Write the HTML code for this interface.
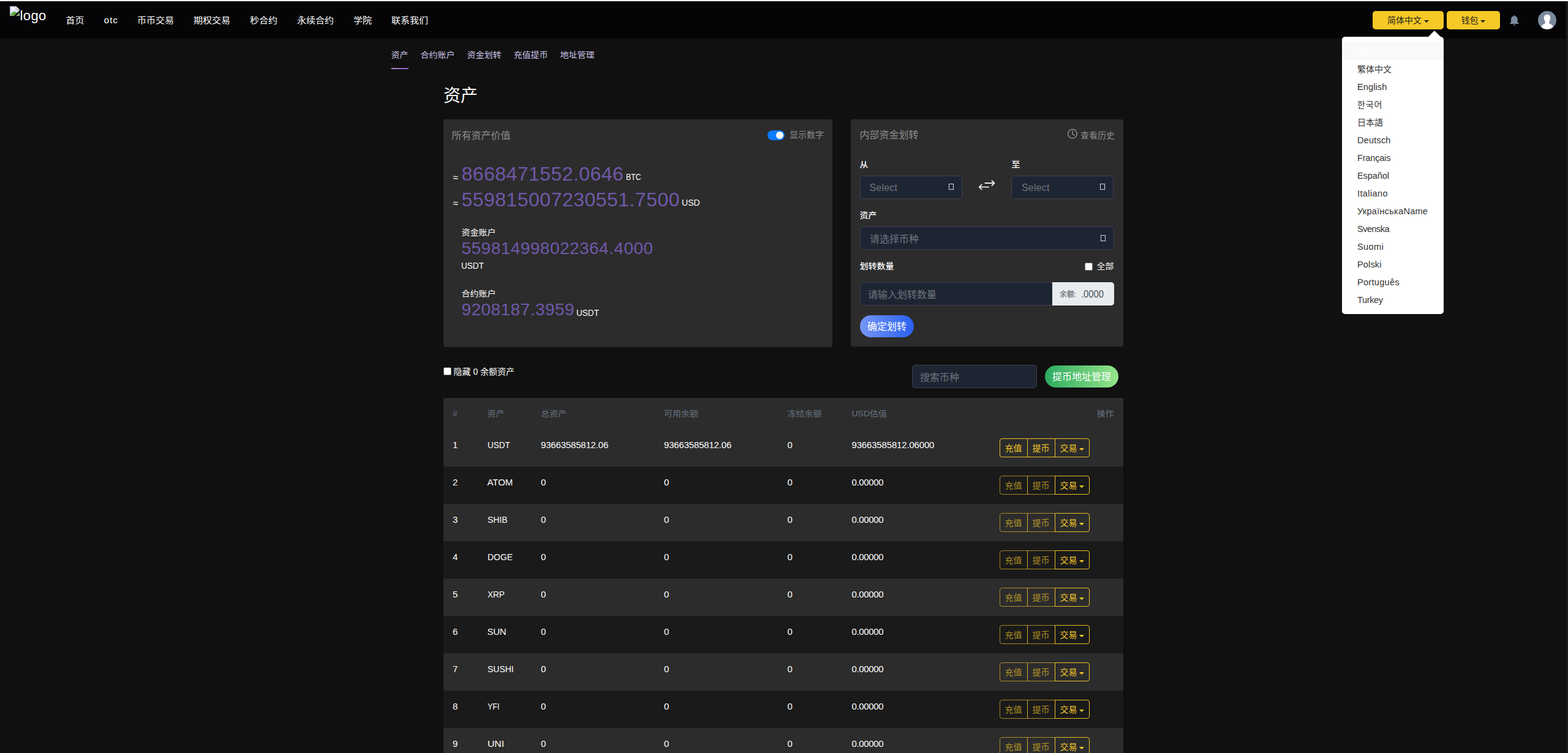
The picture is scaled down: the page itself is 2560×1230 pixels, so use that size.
<!DOCTYPE html>
<html lang="zh-CN">
<head>
<meta charset="utf-8">
<title>资产</title>
<style>
*{box-sizing:border-box;margin:0;padding:0}
html,body{width:2560px;height:1230px;overflow:hidden;background:#101010}
body{position:relative;font-family:"Liberation Sans","Noto Sans CJK SC",sans-serif;font-size:14px;color:#fff;line-height:1.5}
.a{position:absolute;white-space:nowrap}
#topstrip{left:0;top:0;width:2560px;height:2px;background:#fff}
#nav{left:0;top:2px;width:2557px;height:61px;background:#050507}
#sbar{left:2557px;top:2px;width:3px;height:1228px;background:#1a1a1a}
.nv{top:21px;font-size:15px;line-height:24px;color:#fff;transform:scaleY(.92)}
.ybtn{top:18px;height:30px;background:#f6c927;border-radius:5px;color:#1f1f1f;font-size:14px;line-height:30px}
.car{position:absolute;width:0;height:0;border-left:4px solid transparent;border-right:4px solid transparent;border-top:4px solid currentColor}
.sub{top:78px;font-size:14px;line-height:22px;color:#cdc5ec;transform:scaleY(.93)}
.card{background:#2c2c2c;border-radius:3px}
.pur{color:#6f58a9}
.lbl{font-size:14px;line-height:20px;color:#fff;transform:scaleY(.93)}
.sel{background:#1e2532;border:1px solid #3f3f52;border-radius:5px}
.ph{color:#6e757e;font-size:16px;line-height:24px}
.tofu{width:8px;height:10px;border:1px solid #d6d6de}
.chk{width:13px;height:13px;background:#fff;border:1px solid #767676;border-radius:2px}
.dd{left:2191px;top:60px;width:166px;height:453px;background:#fff;border-radius:5px}
.ddi{left:2191px;width:166px;height:29px}
.ddt{left:2216px;font-size:14px;line-height:29px;color:#333}
.th{font-size:14px;line-height:21px;color:#677483;transform:scaleY(.93)}
.td{font-size:15px;line-height:22px;color:#fff}
.row{left:724px;width:1110px;height:61px}
.bt{height:31px;border:1px solid #efbf28;font-size:14px;line-height:31px;color:#f6c927;padding-left:7.5px}
.dis{opacity:.65}
</style>
</head>
<body>
<div class="a" id="nav"></div><div class="a" id="topstrip"></div><div class="a" id="sbar"></div>
<svg class="a" style="left:16px;top:10px" width="16" height="16" viewBox="0 0 16 16">
<path d="M0.5 0.5H10.5L15.5 5.5V15.5H0.5Z" fill="#dbe2f6" stroke="#b0b0b0" stroke-width="1"/>
<path d="M10.5 0.5V5.5H15.5Z" fill="#f6f6f8" stroke="#b0b0b0" stroke-width="1"/>
<path d="M1 15V14L5 9.8C6 9.2 8 9.2 9.5 9.8L13 11.5L15 13V15Z" fill="#5aaa3a"/>
<path d="M2.2 5.2C2 4.2 3.2 3.6 4 4C4.6 2.6 7 2.6 7.6 4.2C8.4 4.2 8.8 4.8 8.6 5.4H2.4Z" fill="#fff"/>
<path d="M6.5 16L16 7V10.5L10.2 16Z" fill="#050507"/>
</svg>
<div class="a" style="left:32.5px;top:13px;font-size:22px;line-height:26px;letter-spacing:0.4px">logo</div>
<div class="a nv" style="left:107.5px;">首页</div>
<div class="a nv" style="left:169.8px;letter-spacing:1.15px;">otc</div>
<div class="a nv" style="left:224px;">币币交易</div>
<div class="a nv" style="left:316px;">期权交易</div>
<div class="a nv" style="left:408px;">秒合约</div>
<div class="a nv" style="left:485px;">永续合约</div>
<div class="a nv" style="left:577px;">学院</div>
<div class="a nv" style="left:639px;">联系我们</div>
<div class="a ybtn" style="left:2241px;width:116px"><span class="a" style="left:24px">简体中文</span><i class="car" style="left:84px;top:15px"></i></div>
<div class="a ybtn" style="left:2362px;width:87px"><span class="a" style="left:23.5px">钱包</span><i class="car" style="left:55px;top:15px"></i></div>
<svg class="a" style="left:2464px;top:24px" width="17" height="19" viewBox="0 0 17 19">
<path d="M8.3 0.8L9.6 2.2C11.8 2.9 13.4 4.4 13.6 6.5V12.2L15.8 14.4V15.1H1.1V14.4L3 12.2V6.5C3.2 4.4 4.8 2.9 7 2.2Z" fill="#7a8a9e"/>
<path d="M6.2 16.1H10.4L8.3 18.2Z" fill="#7a8a9e"/>
</svg>
<svg class="a" style="left:2511px;top:18px" width="30" height="30" viewBox="0 0 30 30">
<circle cx="15" cy="15" r="15" fill="#7a899c"/>
<path fill="#fff" d="M15 5.7C18 5.7 20.2 7.5 20.2 11C20.2 13 19.8 14.5 19 16C18.3 17.2 18.2 18 18.2 19C18.2 20.5 19.5 21 21.5 22C23.5 23 24.5 24.5 24.3 26C23 28.5 19 29.8 15 29.8C11 29.8 7 28.5 5.7 26C5.5 24.5 6.5 23 8.5 22C10.5 21 11.8 20.5 11.8 19C11.8 18 11.7 17.2 11 16C10.2 14.5 9.8 13 9.8 11C9.8 7.5 12 5.7 15 5.7Z"/>
</svg>
<div class="a dd"></div>
<div class="a" style="left:2331.5px;top:50px;width:0;height:0;border-left:10px solid transparent;border-right:10px solid transparent;border-bottom:10px solid #fff"></div>
<div class="a ddi" style="top:69px;background:#f8f9fa"></div>
<div class="a ddt" style="top:70px;color:#fff;">简体中文</div>
<div class="a ddt" style="top:99px;">繁体中文</div>
<div class="a ddt" style="top:128px;font-size:14.5px;letter-spacing:0.12px;">English</div>
<div class="a ddt" style="top:157px;font-family:'Liberation Sans','Noto Sans CJK KR',sans-serif;letter-spacing:0.9px;">한국어</div>
<div class="a ddt" style="top:186px;font-family:'Liberation Sans','Noto Sans CJK JP',sans-serif;">日本語</div>
<div class="a ddt" style="top:215px;font-size:14.5px;letter-spacing:0.20px;">Deutsch</div>
<div class="a ddt" style="top:244px;font-size:14.5px;letter-spacing:-0.17px;">Français</div>
<div class="a ddt" style="top:273px;font-size:14.5px;letter-spacing:-0.07px;">Español</div>
<div class="a ddt" style="top:302px;font-size:14.5px;letter-spacing:0.40px;">Italiano</div>
<div class="a ddt" style="top:331px;font-size:14.5px;letter-spacing:0.28px;">УкраїнськаName</div>
<div class="a ddt" style="top:360px;font-size:14.5px;letter-spacing:-0.50px;">Svenska</div>
<div class="a ddt" style="top:389px;font-size:14.5px;letter-spacing:0.38px;">Suomi</div>
<div class="a ddt" style="top:418px;font-size:14.5px;letter-spacing:0.14px;">Polski</div>
<div class="a ddt" style="top:447px;font-size:14.5px;letter-spacing:0.31px;">Português</div>
<div class="a ddt" style="top:476px;font-size:14.5px;letter-spacing:-0.34px;">Turkey</div>
<div class="a sub" style="left:638.5px">资产</div>
<div class="a sub" style="left:686.5px">合约账户</div>
<div class="a sub" style="left:762.5px">资金划转</div>
<div class="a sub" style="left:838.5px">充值提币</div>
<div class="a sub" style="left:914.5px">地址管理</div>
<div class="a" style="left:639px;top:111px;width:28px;height:2px;background:linear-gradient(90deg,#bb80d2,#7d62c2)"></div>
<div class="a" style="left:724px;top:136px;font-size:28px;line-height:42px;color:#fff">资产</div>
<div class="a card" style="left:724px;top:195px;width:635px;height:372px"></div>
<div class="a" style="left:737.5px;top:210px;font-size:16px;line-height:24px;color:#8d8d8d">所有资产价值</div>
<div class="a" style="left:1253px;top:213px;width:28px;height:16px;border-radius:8px;background:#0b7bff"></div>
<div class="a" style="left:1267px;top:215px;width:12px;height:12px;border-radius:6px;background:#fff"></div>
<div class="a" style="left:1289px;top:209.5px;font-size:14px;line-height:21px;color:#8d8d8d">显示数字</div>
<div class="a" style="left:739.5px;top:266px;font-size:15px;line-height:48px;color:#fff">≈</div>
<div class="a pur" style="left:753.5px;top:260px;font-size:32px;line-height:48px;letter-spacing:0.45px;">8668471552.0646</div>
<div class="a" style="left:1021.5px;top:265px;font-size:15px;line-height:48px;transform:scaleX(0.819);transform-origin:0 50%;">BTC</div>
<div class="a" style="left:739.5px;top:308px;font-size:15px;line-height:48px;color:#fff">≈</div>
<div class="a pur" style="left:753.5px;top:302px;font-size:32px;line-height:48px;letter-spacing:0.47px;">559815007230551.7500</div>
<div class="a" style="left:1113px;top:307px;font-size:15px;line-height:48px;transform:scaleX(0.940);transform-origin:0 50%;">USD</div>
<div class="a lbl" style="left:753.5px;top:369px">资金账户</div>
<div class="a pur" style="left:753.5px;top:385px;font-size:28px;line-height:42px;letter-spacing:0.47px;">559814998022364.4000</div>
<div class="a" style="left:752.5px;top:423px;font-size:15px;line-height:21px;transform:scaleX(0.905);transform-origin:0 50%;">USDT</div>
<div class="a lbl" style="left:753.5px;top:469px">合约账户</div>
<div class="a pur" style="left:753.5px;top:485px;font-size:28px;line-height:42px;letter-spacing:0.45px;">9208187.3959</div>
<div class="a" style="left:940.5px;top:490px;font-size:15px;line-height:42px;transform:scaleX(0.905);transform-origin:0 50%;">USDT</div>
<div class="a card" style="left:1389px;top:195px;width:445px;height:371px"></div>
<div class="a" style="left:1403.5px;top:208.5px;font-size:16px;line-height:24px;color:#8d8d8d">内部资金划转</div>
<svg class="a" style="left:1742px;top:210px" width="18" height="18" viewBox="0 0 18 18" fill="none" stroke="#8d8d8d" stroke-width="1.5">
<circle cx="9" cy="8.6" r="7.3"/><path d="M9 4.2V9L12 11" stroke-linecap="round"/></svg>
<div class="a" style="left:1764px;top:210.5px;font-size:14px;line-height:21px;color:#8d8d8d">查看历史</div>
<div class="a lbl" style="left:1403.5px;top:258px;font-weight:500">从</div>
<div class="a lbl" style="left:1651.5px;top:258px;font-weight:500">至</div>
<div class="a sel" style="left:1404px;top:287px;width:167px;height:38px"></div>
<div class="a ph" style="left:1419.5px;top:295px;letter-spacing:0.20px;">Select</div>
<div class="a tofu" style="left:1549px;top:300px"></div>
<div class="a sel" style="left:1651px;top:287px;width:167px;height:38px"></div>
<div class="a ph" style="left:1668.0px;top:295px;letter-spacing:0.20px;">Select</div>
<div class="a tofu" style="left:1796px;top:300px"></div>
<svg class="a" style="left:1597px;top:293px" width="28" height="20" viewBox="0 0 28 20" fill="none" stroke="#fff" stroke-width="1.7" stroke-linecap="round" stroke-linejoin="round">
<path d="M11.3 6.1H26.4M22.4 2.1L26.5 6.1L22.4 10.1"/><path d="M17.2 12.5H1.8M5.8 8.5L1.7 12.5L5.8 16.5"/></svg>
<div class="a lbl" style="left:1403.5px;top:341px;font-weight:500">资产</div>
<div class="a sel" style="left:1404px;top:370px;width:415px;height:38px"></div>
<div class="a ph" style="left:1420px;top:379px">请选择币种</div>
<div class="a tofu" style="left:1797px;top:384px"></div>
<div class="a lbl" style="left:1403.5px;top:424px;font-weight:500">划转数量</div>
<div class="a chk" style="left:1771px;top:429px"></div>
<div class="a lbl" style="left:1790.5px;top:424px">全部</div>
<div class="a sel" style="left:1404px;top:461px;width:415px;height:38px"></div>
<div class="a" style="left:1718px;top:461px;width:101px;height:38px;background:#e9ecef;border-radius:0 5px 5px 0"></div>
<div class="a ph" style="left:1417px;top:470px">请输入划转数量</div>
<div class="a" style="left:1730px;top:469px;font-size:12px;line-height:24px;color:#495057">余额:</div>
<div class="a" style="left:1765px;top:469px;font-size:16px;line-height:24px;color:#495057;transform:scaleX(0.923);transform-origin:0 50%;">.0000</div>
<div class="a" style="left:1404px;top:515px;width:88px;height:36px;border-radius:18px;background:linear-gradient(90deg,#7596f6,#2a60f0)"></div>
<div class="a" style="left:1416px;top:516px;font-size:16px;line-height:36px;color:#fff">确定划转</div>
<div class="a chk" style="left:724px;top:600px"></div>
<div class="a" style="left:740.5px;top:596.5px;font-size:14px;line-height:21px;color:#fff">隐藏 0 余额资产</div>
<div class="a sel" style="left:1489px;top:596px;width:204px;height:38px"></div>
<div class="a ph" style="left:1502px;top:605px">搜索币种</div>
<div class="a" style="left:1706px;top:597px;width:120px;height:36px;border-radius:18px;background:linear-gradient(90deg,#2dab60,#95e48b)"></div>
<div class="a" style="left:1718px;top:598px;font-size:16px;line-height:36px;color:#fff">提币地址管理</div>
<div class="a" style="left:724px;top:650px;width:1110px;height:51px;background:#2c2c2c"></div>
<div class="a th" style="left:739px;top:664.5px">#</div>
<div class="a th" style="left:795.5px;top:664.5px">资产</div>
<div class="a th" style="left:883px;top:664.5px">总资产</div>
<div class="a th" style="left:1084px;top:664.5px">可用余额</div>
<div class="a th" style="left:1285.5px;top:664.5px">冻结余额</div>
<div class="a th" style="left:1390.5px;top:664.5px">USD估值</div>
<div class="a th" style="left:1790.5px;top:664.5px">操作</div>
<div class="a row" style="top:701px;background:#2c2c2c"></div>
<div class="a td" style="left:739px;top:715.5px;">1</div>
<div class="a td" style="left:795.5px;top:715.5px;transform:scaleX(0.897);transform-origin:0 50%;">USDT</div>
<div class="a td" style="left:883px;top:715.5px;letter-spacing:-0.18px;">93663585812.06</div>
<div class="a td" style="left:1084px;top:715.5px;letter-spacing:-0.18px;">93663585812.06</div>
<div class="a td" style="left:1285.5px;top:715.5px;">0</div>
<div class="a td" style="left:1390.5px;top:715.5px;letter-spacing:-0.17px;">93663585812.06000</div>
<div class="a bt" style="left:1632px;top:716px;width:46px;border-radius:4px 0 0 4px">充值</div>
<div class="a bt" style="left:1677px;top:716px;width:46px">提币</div>
<div class="a bt" style="left:1722px;top:716px;width:57px;border-radius:0 4px 4px 0">交易<i class="car" style="left:39px;top:15px"></i></div>
<div class="a row" style="top:762px;background:#1a1a1a"></div>
<div class="a td" style="left:739px;top:776.5px;">2</div>
<div class="a td" style="left:795.5px;top:776.5px;letter-spacing:-0.07px;">ATOM</div>
<div class="a td" style="left:883px;top:776.5px;">0</div>
<div class="a td" style="left:1084px;top:776.5px;">0</div>
<div class="a td" style="left:1285.5px;top:776.5px;">0</div>
<div class="a td" style="left:1390.5px;top:776.5px;letter-spacing:-0.37px;">0.00000</div>
<div class="a bt dis" style="left:1632px;top:777px;width:46px;border-radius:4px 0 0 4px">充值</div>
<div class="a bt dis" style="left:1677px;top:777px;width:46px">提币</div>
<div class="a bt" style="left:1722px;top:777px;width:57px;border-radius:0 4px 4px 0">交易<i class="car" style="left:39px;top:15px"></i></div>
<div class="a row" style="top:823px;background:#2c2c2c"></div>
<div class="a td" style="left:739px;top:837.5px;">3</div>
<div class="a td" style="left:795.5px;top:837.5px;transform:scaleX(0.926);transform-origin:0 50%;">SHIB</div>
<div class="a td" style="left:883px;top:837.5px;">0</div>
<div class="a td" style="left:1084px;top:837.5px;">0</div>
<div class="a td" style="left:1285.5px;top:837.5px;">0</div>
<div class="a td" style="left:1390.5px;top:837.5px;letter-spacing:-0.37px;">0.00000</div>
<div class="a bt dis" style="left:1632px;top:838px;width:46px;border-radius:4px 0 0 4px">充值</div>
<div class="a bt dis" style="left:1677px;top:838px;width:46px">提币</div>
<div class="a bt" style="left:1722px;top:838px;width:57px;border-radius:0 4px 4px 0">交易<i class="car" style="left:39px;top:15px"></i></div>
<div class="a row" style="top:884px;background:#1a1a1a"></div>
<div class="a td" style="left:739px;top:898.5px;">4</div>
<div class="a td" style="left:795.5px;top:898.5px;transform:scaleX(0.928);transform-origin:0 50%;">DOGE</div>
<div class="a td" style="left:883px;top:898.5px;">0</div>
<div class="a td" style="left:1084px;top:898.5px;">0</div>
<div class="a td" style="left:1285.5px;top:898.5px;">0</div>
<div class="a td" style="left:1390.5px;top:898.5px;letter-spacing:-0.37px;">0.00000</div>
<div class="a bt dis" style="left:1632px;top:899px;width:46px;border-radius:4px 0 0 4px">充值</div>
<div class="a bt dis" style="left:1677px;top:899px;width:46px">提币</div>
<div class="a bt" style="left:1722px;top:899px;width:57px;border-radius:0 4px 4px 0">交易<i class="car" style="left:39px;top:15px"></i></div>
<div class="a row" style="top:945px;background:#2c2c2c"></div>
<div class="a td" style="left:739px;top:959.5px;">5</div>
<div class="a td" style="left:795.5px;top:959.5px;transform:scaleX(0.903);transform-origin:0 50%;">XRP</div>
<div class="a td" style="left:883px;top:959.5px;">0</div>
<div class="a td" style="left:1084px;top:959.5px;">0</div>
<div class="a td" style="left:1285.5px;top:959.5px;">0</div>
<div class="a td" style="left:1390.5px;top:959.5px;letter-spacing:-0.37px;">0.00000</div>
<div class="a bt dis" style="left:1632px;top:960px;width:46px;border-radius:4px 0 0 4px">充值</div>
<div class="a bt dis" style="left:1677px;top:960px;width:46px">提币</div>
<div class="a bt" style="left:1722px;top:960px;width:57px;border-radius:0 4px 4px 0">交易<i class="car" style="left:39px;top:15px"></i></div>
<div class="a row" style="top:1006px;background:#1a1a1a"></div>
<div class="a td" style="left:739px;top:1020.5px;">6</div>
<div class="a td" style="left:795.5px;top:1020.5px;letter-spacing:-0.35px;">SUN</div>
<div class="a td" style="left:883px;top:1020.5px;">0</div>
<div class="a td" style="left:1084px;top:1020.5px;">0</div>
<div class="a td" style="left:1285.5px;top:1020.5px;">0</div>
<div class="a td" style="left:1390.5px;top:1020.5px;letter-spacing:-0.37px;">0.00000</div>
<div class="a bt dis" style="left:1632px;top:1021px;width:46px;border-radius:4px 0 0 4px">充值</div>
<div class="a bt dis" style="left:1677px;top:1021px;width:46px">提币</div>
<div class="a bt" style="left:1722px;top:1021px;width:57px;border-radius:0 4px 4px 0">交易<i class="car" style="left:39px;top:15px"></i></div>
<div class="a row" style="top:1067px;background:#2c2c2c"></div>
<div class="a td" style="left:739px;top:1081.5px;">7</div>
<div class="a td" style="left:795.5px;top:1081.5px;transform:scaleX(0.932);transform-origin:0 50%;">SUSHI</div>
<div class="a td" style="left:883px;top:1081.5px;">0</div>
<div class="a td" style="left:1084px;top:1081.5px;">0</div>
<div class="a td" style="left:1285.5px;top:1081.5px;">0</div>
<div class="a td" style="left:1390.5px;top:1081.5px;letter-spacing:-0.37px;">0.00000</div>
<div class="a bt dis" style="left:1632px;top:1082px;width:46px;border-radius:4px 0 0 4px">充值</div>
<div class="a bt dis" style="left:1677px;top:1082px;width:46px">提币</div>
<div class="a bt" style="left:1722px;top:1082px;width:57px;border-radius:0 4px 4px 0">交易<i class="car" style="left:39px;top:15px"></i></div>
<div class="a row" style="top:1128px;background:#1a1a1a"></div>
<div class="a td" style="left:739px;top:1142.5px;">8</div>
<div class="a td" style="left:795.5px;top:1142.5px;transform:scaleX(0.835);transform-origin:0 50%;">YFI</div>
<div class="a td" style="left:883px;top:1142.5px;">0</div>
<div class="a td" style="left:1084px;top:1142.5px;">0</div>
<div class="a td" style="left:1285.5px;top:1142.5px;">0</div>
<div class="a td" style="left:1390.5px;top:1142.5px;letter-spacing:-0.37px;">0.00000</div>
<div class="a bt dis" style="left:1632px;top:1143px;width:46px;border-radius:4px 0 0 4px">充值</div>
<div class="a bt dis" style="left:1677px;top:1143px;width:46px">提币</div>
<div class="a bt" style="left:1722px;top:1143px;width:57px;border-radius:0 4px 4px 0">交易<i class="car" style="left:39px;top:15px"></i></div>
<div class="a row" style="top:1189px;background:#2c2c2c"></div>
<div class="a td" style="left:739px;top:1203.5px;">9</div>
<div class="a td" style="left:795.5px;top:1203.5px;transform:scaleX(1.046);transform-origin:0 50%;">UNI</div>
<div class="a td" style="left:883px;top:1203.5px;">0</div>
<div class="a td" style="left:1084px;top:1203.5px;">0</div>
<div class="a td" style="left:1285.5px;top:1203.5px;">0</div>
<div class="a td" style="left:1390.5px;top:1203.5px;letter-spacing:-0.37px;">0.00000</div>
<div class="a bt dis" style="left:1632px;top:1204px;width:46px;border-radius:4px 0 0 4px">充值</div>
<div class="a bt dis" style="left:1677px;top:1204px;width:46px">提币</div>
<div class="a bt" style="left:1722px;top:1204px;width:57px;border-radius:0 4px 4px 0">交易<i class="car" style="left:39px;top:15px"></i></div>
</body>
</html>
